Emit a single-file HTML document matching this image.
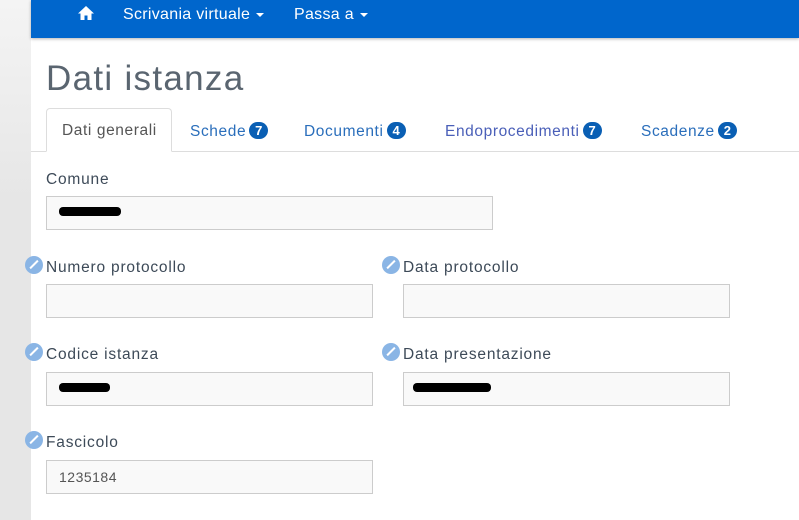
<!DOCTYPE html>
<html><head><meta charset="utf-8"><style>
*{margin:0;padding:0;box-sizing:border-box}
body{width:799px;height:520px;overflow:hidden;background:#fff;font-family:"Liberation Sans",sans-serif;position:relative}
.side{position:absolute;left:0;top:0;width:31px;height:520px;background:linear-gradient(#f4f4f4,#e6e6e6 200px,#e6e6e6)}
.nav{position:absolute;left:31px;top:0;width:768px;height:38px;background:#0066cc;box-shadow:0 1px 3px rgba(0,0,0,.3)}
.nav span{position:absolute;top:6px;color:#fff;font-size:16px;letter-spacing:.3px}
.car{display:inline-block;border-left:4px solid transparent;border-right:4px solid transparent;border-top:4px solid #fff;vertical-align:middle;margin-left:6px}
h1{position:absolute;left:46px;top:59px;font-size:35px;font-weight:normal;color:#5a6570;letter-spacing:1.3px}
.tabline{position:absolute;left:31px;top:151px;width:768px;height:1px;background:#ddd}
.tab{position:absolute;top:108px;height:44px;border:1px solid #ddd;border-bottom:1px solid #fff;border-radius:4px 4px 0 0;left:46px;width:126px;background:#fff}
.t{position:absolute;top:122px;font-size:15.5px;color:#2a6ebb;white-space:nowrap;letter-spacing:.6px}
.b{display:inline-block;background:#0a5fb4;color:#fff;border-radius:10px;font-size:13px;font-weight:bold;padding:1px 6px;margin-left:3px;vertical-align:1px;letter-spacing:0}
.l{position:absolute;font-size:15.5px;color:#3d4a58;white-space:nowrap;letter-spacing:.8px}
.i{position:absolute;height:34px;background:#f9f9f9;border:1px solid #ccc;font-size:14px;color:#555;padding:8px 12px;letter-spacing:.5px}
.p{position:absolute;width:18px;height:18px;border-radius:50%;background:#8ab5e5}
.p:after{content:"";position:absolute;left:8px;top:3px;width:2px;height:11px;background:#fff;transform:rotate(45deg)}
.r{position:absolute;height:9px;background:#000;border-radius:4px}
</style></head><body>
<div class="side"></div>
<div class="nav">
<svg style="position:absolute;left:46px;top:5px" width="18" height="16" viewBox="0 0 18 16"><path d="M9 1L1 8.5h2.5V15h4v-4.5h3V15h4V8.5H17z" fill="#fff"/></svg>
<span style="left:92px">Scrivania virtuale<i class="car"></i></span>
<span style="left:263px">Passa a<i class="car"></i></span>
</div>
<h1>Dati istanza</h1>
<div class="tabline"></div>
<div class="tab"></div>
<div class="t" style="left:62px;color:#555">Dati generali</div>
<div class="t" style="left:190px">Schede<span class="b">7</span></div>
<div class="t" style="left:304px">Documenti<span class="b">4</span></div>
<div class="t" style="left:445px;color:#4a5fb8">Endoprocedimenti<span class="b">7</span></div>
<div class="t" style="left:641px">Scadenze<span class="b">2</span></div>

<div class="l" style="left:46px;top:171px">Comune</div>
<div class="i" style="left:46px;top:196px;width:447px"></div>
<div class="r" style="left:59px;top:207px;width:62px"></div>

<div class="p" style="left:25px;top:256px"></div>
<div class="l" style="left:46px;top:259px">Numero protocollo</div>
<div class="i" style="left:46px;top:284px;width:327px"></div>
<div class="p" style="left:382px;top:256px"></div>
<div class="l" style="left:403px;top:259px">Data protocollo</div>
<div class="i" style="left:403px;top:284px;width:327px"></div>

<div class="p" style="left:25px;top:343px"></div>
<div class="l" style="left:46px;top:346px">Codice istanza</div>
<div class="i" style="left:46px;top:372px;width:327px"></div>
<div class="r" style="left:59px;top:383px;width:51px"></div>
<div class="p" style="left:382px;top:343px"></div>
<div class="l" style="left:403px;top:346px">Data presentazione</div>
<div class="i" style="left:403px;top:372px;width:327px"></div>
<div class="r" style="left:413px;top:383px;width:78px"></div>

<div class="p" style="left:25px;top:431px"></div>
<div class="l" style="left:46px;top:434px">Fascicolo</div>
<div class="i" style="left:46px;top:460px;width:327px">1235184</div>
</body></html>
